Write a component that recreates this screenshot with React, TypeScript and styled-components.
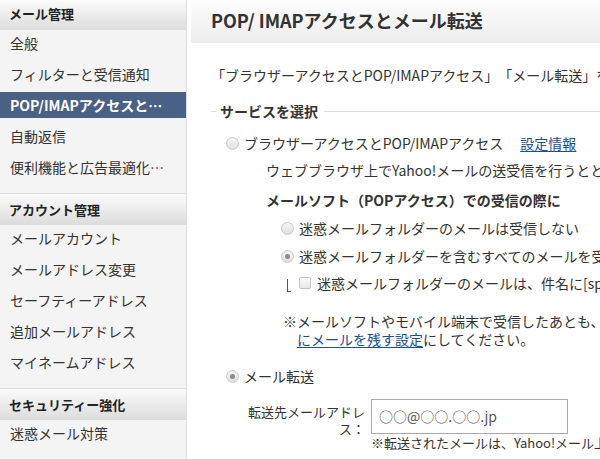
import React from 'react';
import styled, { createGlobalStyle } from 'styled-components';

const GlobalStyle = createGlobalStyle`
  html, body {
    margin: 0;
    padding: 0;
    background: #ffffff;
    overflow: hidden;
  }
  body {
    font-family: "Noto Sans CJK JP", "Liberation Sans", sans-serif;
    color: #333333;
    text-spacing-trim: space-all;
  }
`;

const Page = styled.div`
  display: flex;
  flex-direction: row;
  min-height: 100vh;
  width: 600px;
  overflow: hidden;
`;

const Sidebar = styled.nav`
  flex: 0 0 186px;
  width: 186px;
  background: #f4f4f4;
  border-right: 1px solid #dedede;
`;

const Section = styled.div`
  padding-bottom: 8px;
`;

const SectionHeader = styled.div<{ $first?: boolean }>`
  height: ${({ $first }) => ($first ? '30px' : '31px')};
  line-height: ${({ $first }) => ($first ? '28px' : '31px')};
  padding-left: 9px;
  font-size: 13px;
  font-weight: 700;
  color: #222222;
  background: linear-gradient(#fbfbfb, #dcdcdc);
  border-top: ${({ $first }) => ($first ? 'none' : '1px solid #dcdcdc')};
`;

const NavItem = styled.div<{ $active?: boolean }>`
  height: 26px;
  line-height: 26px;
  margin-bottom: 5px;
  padding-left: 10px;
  font-size: 14px;
  white-space: nowrap;
  overflow: hidden;
  color: ${({ $active }) => ($active ? '#ffffff' : '#333333')};
  background: ${({ $active }) => ($active ? '#4a6186' : 'transparent')};
  font-weight: ${({ $active }) => ($active ? 700 : 400)};
`;

const Main = styled.main`
  flex: 1;
  min-width: 0;
  padding-left: 4px;
`;

const TitleBar = styled.header`
  height: 43px;
  line-height: 41px;
  padding-left: 20px;
  background: linear-gradient(#fdfdfd, #ececec);
  font-size: 18px;
  font-weight: 700;
  color: #333333;
  white-space: nowrap;
`;

const Content = styled.div`
  padding-left: 20px;
  width: 560px;
  font-size: 14px;
  white-space: nowrap;
`;

const Intro = styled.p`
  margin: 22px 0 0;
  line-height: 20px;
`;

const LegendRow = styled.div`
  display: flex;
  align-items: center;
  margin-top: 16px;
  height: 20px;
  font-weight: 700;

  &::before {
    content: '';
    width: 6px;
    height: 1px;
    background: #dddddd;
    margin-right: 3px;
  }
  &::after {
    content: '';
    flex: 1;
    height: 1px;
    background: #dddddd;
    margin-left: 6px;
  }
`;

const OptionRow = styled.label<{ $indent: number; $top: number }>`
  display: flex;
  align-items: center;
  height: 20px;
  margin-top: ${({ $top }) => $top}px;
  padding-left: ${({ $indent }) => $indent}px;
  line-height: 20px;
`;

const Radio = styled.span<{ $checked?: boolean }>`
  position: relative;
  flex: 0 0 auto;
  width: 11px;
  height: 11px;
  margin-right: 5px;
  border-radius: 50%;
  border: 1px solid #c8c8c8;
  background: linear-gradient(#f6f6f6, #e0e0e0);

  &::after {
    content: '';
    display: ${({ $checked }) => ($checked ? 'block' : 'none')};
    position: absolute;
    left: 3px;
    top: 3px;
    width: 5px;
    height: 5px;
    border-radius: 50%;
    background: #8a8a8a;
  }
`;

const Checkbox = styled.span`
  flex: 0 0 auto;
  width: 10px;
  height: 10px;
  margin-right: 6px;
  border: 1px solid #c4c4c4;
  border-radius: 2px;
  background: linear-gradient(#fafafa, #e8e8e8);
`;

const Bracket = styled.span`
  flex: 0 0 auto;
  width: 3px;
  height: 12px;
  margin: 4px 8px 0 0;
  border-left: 1px solid #555555;
  border-bottom: 1px solid #555555;
`;

const Link = styled.a`
  color: #1d4f8f;
  text-decoration: underline;
  text-underline-offset: 2px;
`;

const SettingLink = styled(Link)`
  margin-left: 17px;
`;

const Paragraph = styled.p<{ $indent: number; $top: number; $bold?: boolean }>`
  margin: ${({ $top }) => $top}px 0 0;
  padding-left: ${({ $indent }) => $indent}px;
  line-height: 20px;
  font-weight: ${({ $bold }) => ($bold ? 700 : 400)};
`;

const Note = styled.p`
  margin: 19px 0 0;
  padding-left: 86px;
  text-indent: -14px;
  line-height: 18px;
`;

const FormRow = styled.div`
  display: flex;
  margin-top: 13px;
  padding-left: 37px;
  gap: 6px;
`;

const FieldLabel = styled.div`
  flex: 0 0 117px;
  width: 117px;
  padding-top: 4px;
  font-size: 13px;
  line-height: 17px;
  text-align: right;
  white-space: normal;
`;

const FieldBody = styled.div`
  display: flex;
  flex-direction: column;
`;

const TextInput = styled.div`
  box-sizing: border-box;
  width: 197px;
  height: 35px;
  padding-left: 7px;
  border: 1px solid #a9a9a9;
  font-size: 14px;
  line-height: 33px;
  color: #555555;
`;

const FieldNote = styled.div`
  font-size: 13px;
  line-height: 18px;
`;

const App: React.FC = () => {
  return (
    <>
      <GlobalStyle />
      <Page>
        <Sidebar>
          <Section>
            <SectionHeader $first>メール管理</SectionHeader>
            <NavItem>全般</NavItem>
            <NavItem>フィルターと受信通知</NavItem>
            <NavItem $active>POP/IMAPアクセスと…</NavItem>
            <NavItem>自動返信</NavItem>
            <NavItem>便利機能と広告最適化…</NavItem>
          </Section>
          <Section>
            <SectionHeader>アカウント管理</SectionHeader>
            <NavItem>メールアカウント</NavItem>
            <NavItem>メールアドレス変更</NavItem>
            <NavItem>セーフティーアドレス</NavItem>
            <NavItem>追加メールアドレス</NavItem>
            <NavItem>マイネームアドレス</NavItem>
          </Section>
          <Section>
            <SectionHeader>セキュリティー強化</SectionHeader>
            <NavItem>迷惑メール対策</NavItem>
          </Section>
        </Sidebar>
        <Main>
          <TitleBar>POP/ IMAPアクセスとメール転送</TitleBar>
          <Content>
            <Intro>「ブラウザーアクセスとPOP/IMAPアクセス」「メール転送」をご利用いただけます。</Intro>
            <LegendRow>サービスを選択</LegendRow>
            <OptionRow $indent={15} $top={12}>
              <Radio />
              ブラウザーアクセスとPOP/IMAPアクセス
              <SettingLink>設定情報</SettingLink>
            </OptionRow>
            <Paragraph $indent={55} $top={7}>
              ウェブブラウザ上でYahoo!メールの送受信を行うとともに、メールソフトでも送受信します。
            </Paragraph>
            <Paragraph $indent={55} $top={10} $bold>
              メールソフト（POPアクセス）での受信の際に
            </Paragraph>
            <OptionRow $indent={70} $top={8}>
              <Radio />
              迷惑メールフォルダーのメールは受信しない
            </OptionRow>
            <OptionRow $indent={70} $top={8}>
              <Radio $checked />
              迷惑メールフォルダーを含むすべてのメールを受信する
            </OptionRow>
            <OptionRow $indent={76} $top={7}>
              <Bracket />
              <Checkbox />
              迷惑メールフォルダーのメールは、件名に[spam]を付ける
            </OptionRow>
            <Note>
              ※メールソフトやモバイル端末で受信したあとも、ウェブ上
              <br />
              <Link>にメールを残す設定</Link>にしてください。
            </Note>
            <OptionRow $indent={15} $top={18}>
              <Radio $checked />
              メール転送
            </OptionRow>
            <FormRow>
              <FieldLabel>転送先メールアドレス：</FieldLabel>
              <FieldBody>
                <TextInput>○○@○○.○○.jp</TextInput>
                <FieldNote>※転送されたメールは、Yahoo!メール上には残りません。</FieldNote>
              </FieldBody>
            </FormRow>
          </Content>
        </Main>
      </Page>
    </>
  );
};

export default App;
